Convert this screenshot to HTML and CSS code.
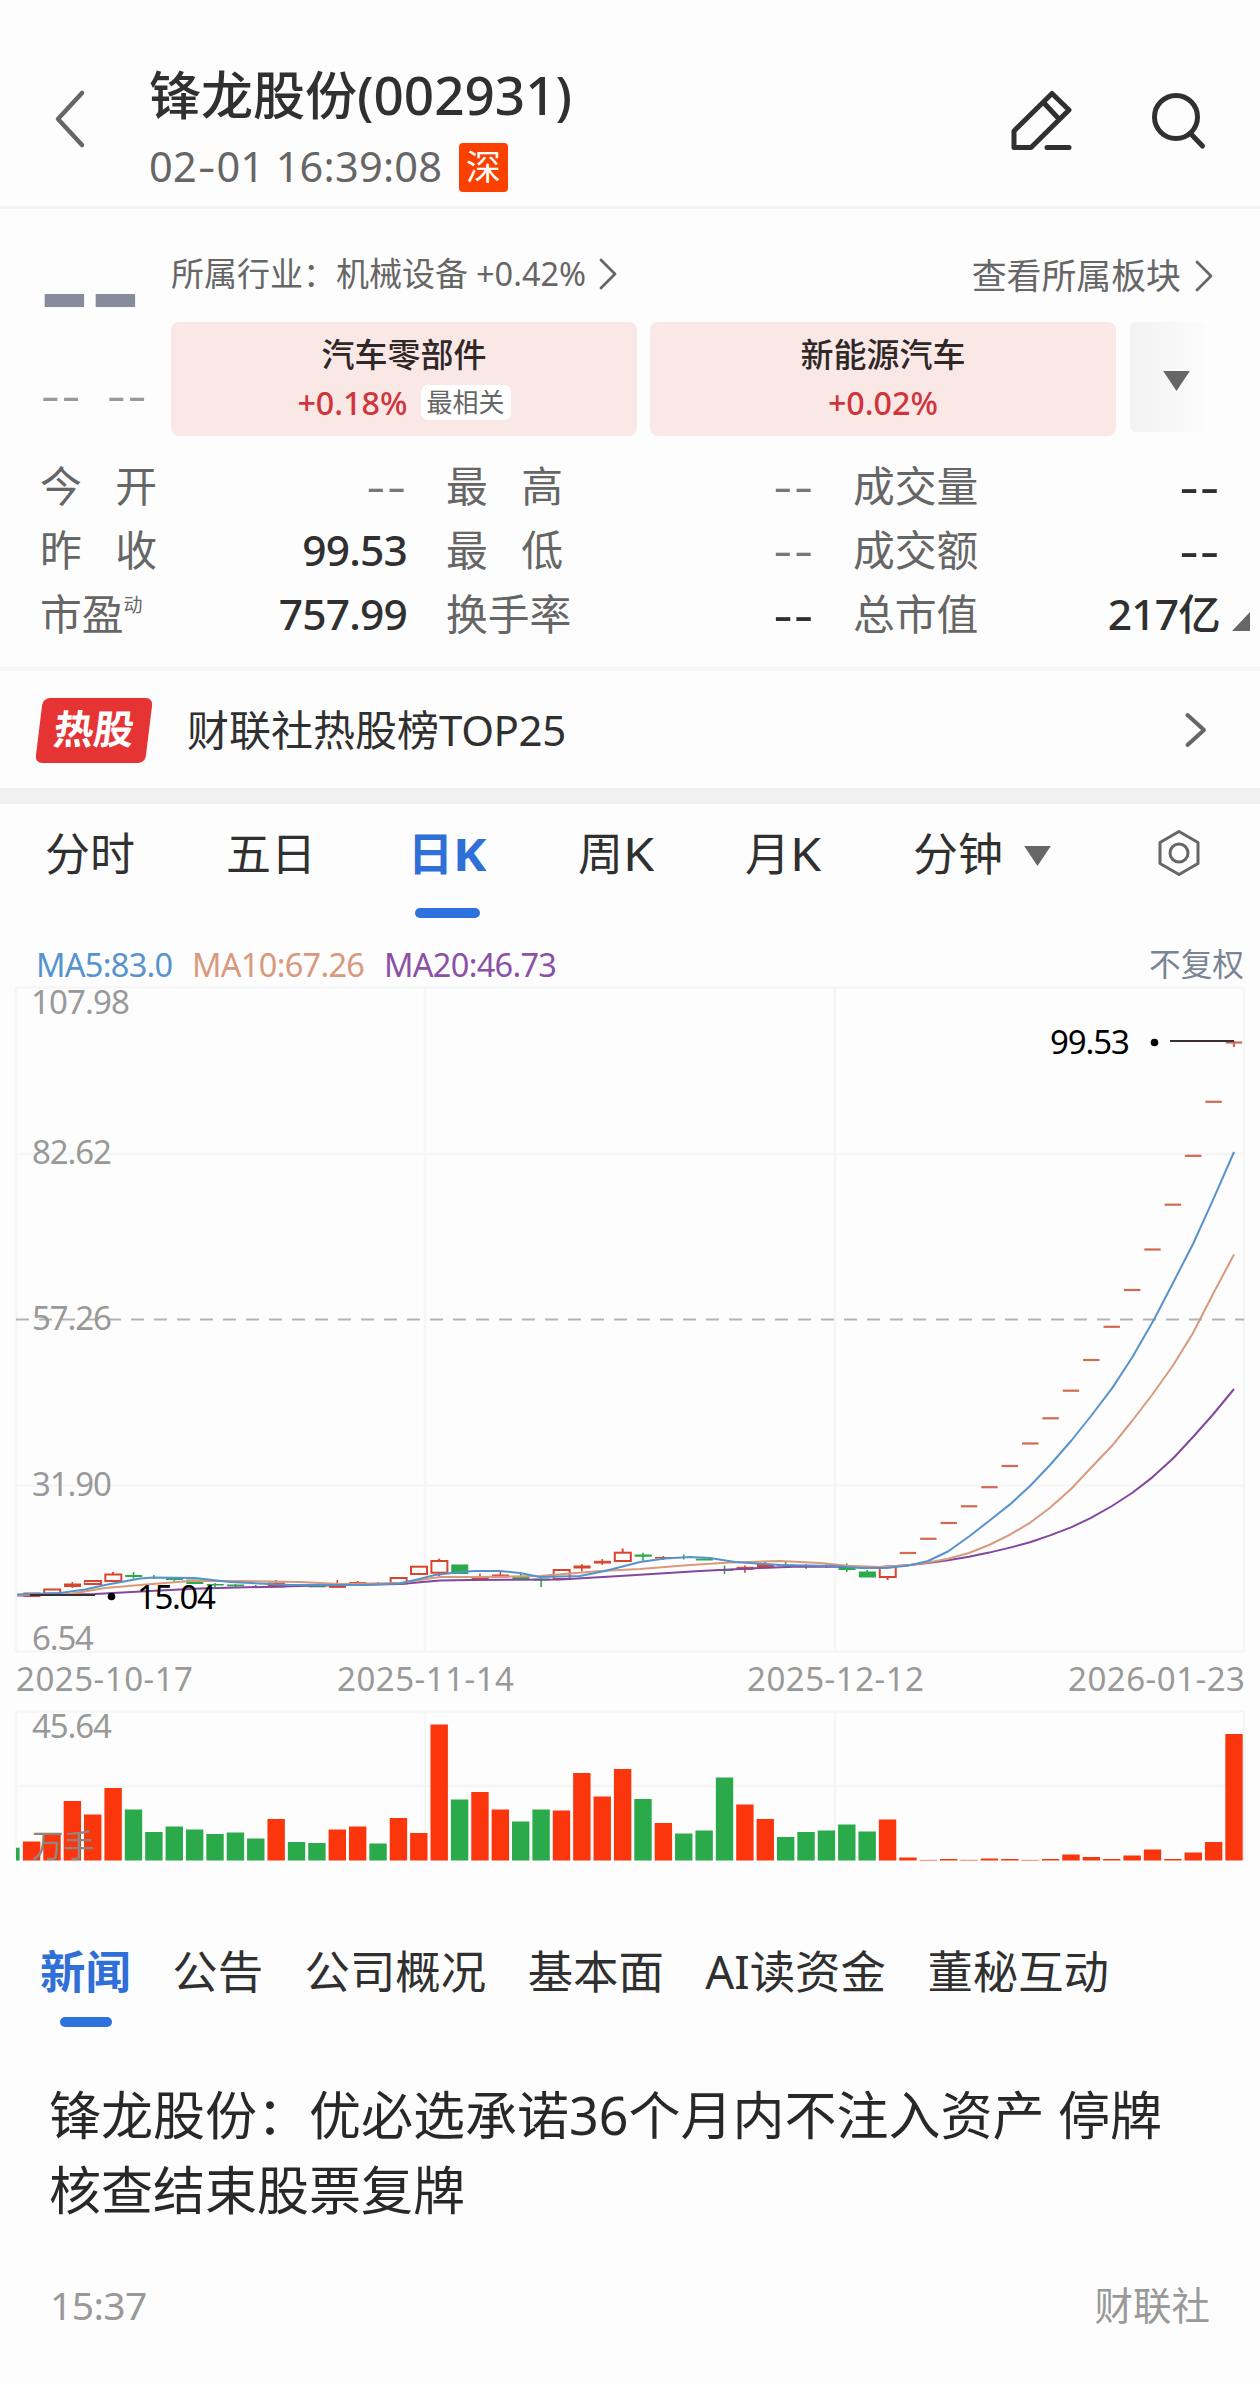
FILE: index.html
```html
<!DOCTYPE html>
<html lang="zh-CN">
<head>
<meta charset="utf-8">
<title>锋龙股份(002931)</title>
<link rel="stylesheet" href="styles.css">
</head>
<body>
<header class="topbar">
  <svg class="back" viewBox="0 0 34 60"><path d="M29 5 5 31l24 26"/></svg>
  <div class="heading">
    <h1 class="name">锋龙股份<span class="code">(002931)</span></h1>
    <div class="stamp"><span class="stamp-time">02<span class="hy">-</span>01 16:39:08</span><span class="market">深</span></div>
  </div>
  <div class="actions">
    <svg class="edit" viewBox="0 0 64 64"><path d="M43 6.500 60 23 22 60.500H5V44ZM35.500 16.500 49 31M38 60.500H60"/></svg>
    <svg class="search" viewBox="0 0 64 64"><circle cx="28" cy="30" r="21.500"/><path d="M42.500 46.500 54.500 59"/></svg>
  </div>
</header>

<section class="quote">
  <div class="quote-top">
    <div class="price">
      <div class="price-now"><span>-</span><span>-</span></div>
      <div class="price-diff"><span class="nil">--</span><span class="nil">--</span></div>
    </div>
    <div class="sectors">
      <div class="sector-head">
        <div class="industry"><span>所属行业：机械设备</span><span class="industry-pct">+0.42%</span><svg class="chev" viewBox="0 0 18 32"><path d="M2 2 16 16 2 30"/></svg></div>
        <div class="boards"><span>查看所属板块</span><svg class="chev" viewBox="0 0 18 32"><path d="M2 2 16 16 2 30"/></svg></div>
      </div>
      <div class="cards">
        <div class="card"><div class="card-name">汽车零部件</div><div class="card-row"><span class="card-pct">+0.18%</span><span class="tag">最相关</span></div></div>
        <div class="card"><div class="card-name">新能源汽车</div><div class="card-row"><span class="card-pct">+0.02%</span></div></div>
        <div class="more"><svg class="tri" viewBox="0 0 28 21"><path d="M0 0H28L14 21Z"/></svg></div>
      </div>
    </div>
  </div>
  <div class="stats">
    <div class="stat"><span class="label two"><i>今</i><i>开</i></span><span class="nil">--</span></div>
    <div class="stat"><span class="label two"><i>最</i><i>高</i></span><span class="nil">--</span></div>
    <div class="stat"><span class="label">成交量</span><span class="nil dark">--</span></div>
    <div class="stat"><span class="label two"><i>昨</i><i>收</i></span><span class="val">99.53</span></div>
    <div class="stat"><span class="label two"><i>最</i><i>低</i></span><span class="nil">--</span></div>
    <div class="stat"><span class="label">成交额</span><span class="nil dark">--</span></div>
    <div class="stat"><span class="label">市盈<sup>动</sup></span><span class="val">757.99</span></div>
    <div class="stat"><span class="label">换手率</span><span class="nil dark">--</span></div>
    <div class="stat"><span class="label">总市值</span><span class="val">217亿</span><svg class="corner" viewBox="0 0 18 19"><path d="M18 0V19H0Z"/></svg></div>
  </div>
</section>

<section class="hot">
  <div class="hot-badge"><span>热股</span></div>
  <div class="hot-text">财联社热股榜<span class="top">TOP25</span></div>
  <svg class="hot-chev" viewBox="0 0 24 36"><path d="M3.500 3 20 18 3.500 33"/></svg>
</section>

<nav class="periods">
  <span class="p1">分时</span><span class="p2">五日</span><span class="p3 on">日<b>K</b></span><span class="p4">周<b>K</b></span><span class="p5">月<b>K</b></span><span class="p6">分钟</span>
  <svg class="tri" viewBox="0 0 28 21"><path d="M0 0H28L14 21Z"/></svg>
  <svg class="gear" viewBox="0 0 44 48"><path d="M22 2.500 41 13.500V34.500L22 45.500 3 34.500V13.500Z"/><circle cx="22" cy="24" r="9"/></svg>
</nav>

<section class="legend">
  <span class="ma5">MA5:83.0</span><span class="ma10">MA10:67.26</span><span class="ma20">MA20:46.73</span><span class="adjust">不复权</span>
</section>

<svg class="chart" viewBox="0 982 1260 888">
  <g class="grid">
    <path d="M16 987.500H1244M16 1154H1244M16 1485.500H1244M16 1651.500H1244M16 987V1651M425 987V1651M835 987V1651M1244 987V1651"/>
    <path d="M16 1711.500H1244M16 1786H1244M16 1711V1860M425 1711V1860M835 1711V1860M1244 1711V1860"/>
  </g>
  <path class="mid" d="M16 1319.500H1244"/>
  <g id="volume"></g>
  <g id="candles"></g>
  <path class="line ma20" d="M17 1595.500 95 1594 150 1591 200 1588.500 300 1586 400 1584 440 1580.500 470 1580 560 1579.500 620 1576 700 1571 760 1568 800 1566.500 880 1567 908 1565.300 928 1563 948 1560.300 969 1556.800 989 1552.600 1010 1547.600 1030 1542.300 1050 1535.400 1071 1527.400 1091 1517.800 1112 1506 1132 1493 1152 1477.600 1173 1458.500 1193 1437 1213 1414.500 1234 1389"/>
  <path class="line ma10" d="M17 1595 70 1594 105 1588 140 1585 190 1581 240 1581 300 1582 340 1584 400 1583 440 1577 480 1577 540 1576 600 1571 640 1569 690 1565 730 1562.500 780 1561 820 1563 850 1566 880 1567 908 1565.200 928 1562.600 948 1558.700 969 1553 989 1545 1010 1534.600 1030 1522.800 1050 1507.800 1071 1489 1091 1467.700 1112 1445.800 1132 1421 1152 1395 1173 1365.500 1193 1333 1213 1294 1234 1254.500"/>
  <path class="line ma5" d="M17 1594.500 60 1593 85 1589.500 105 1585 140 1578.500 153 1577.500 195 1578 230 1582 290 1585 360 1585 400 1583.500 415 1580 435 1575 460 1572 475 1571 500 1571 520 1573 540 1577 560 1576.500 580 1576 605 1571 640 1562 665 1558.500 690 1557 710 1558 735 1562 780 1565 835 1566 860 1568 887 1568 908 1565.600 928 1561 948 1551.500 969 1536.500 989 1521 1010 1504.400 1030 1486 1050 1465 1071 1441 1091 1416 1112 1388.400 1132 1357.800 1154 1319.500 1173 1283 1193 1244 1213 1199.800 1234 1152"/>
  <path class="pointer" d="M1170 1041H1234M30 1595H95"/>
  <circle cx="1154.500" cy="1042.500" r="3.800"/><circle cx="111.500" cy="1596.500" r="3.800"/>
  <g class="mark">
    <text x="1050" y="1054" textLength="80">99.53</text>
    <text x="137" y="1608.500" textLength="79">15.04</text>
  </g>
  <g class="axis">
    <text x="31" y="1013.500" textLength="99">107.98</text>
    <text x="32" y="1163.500" textLength="80">82.62</text>
    <text x="32" y="1330" textLength="80">57.26</text>
    <text x="32" y="1495.500" textLength="80">31.90</text>
    <text x="32" y="1649.500" textLength="62">6.54</text>
    <text x="16" y="1690.500" textLength="177">2025-10-17</text>
    <text x="337" y="1690.500" textLength="177">2025-11-14</text>
    <text x="747" y="1690.500" textLength="177">2025-12-12</text>
    <text x="1068" y="1690.500" textLength="177">2026-01-23</text>
    <text x="32" y="1737.500" textLength="80">45.64</text>
    <text class="unit" x="32" y="1857">万手</text>
  </g>
</svg>

<nav class="topics">
  <span class="on">新闻</span><span>公告</span><span>公司概况</span><span>基本面</span><span>AI读资金</span><span>董秘互动</span>
</nav>

<article class="news">
  <h2 class="news-title">锋龙股份：优必选承诺36个月内不注入资产 停牌<br>核查结束股票复牌</h2>
  <div class="news-meta"><span class="news-time">15:37</span><span>财联社</span></div>
</article>
<script src="chart.js"></script>
</body>
</html>
```

FILE: styles.css
```css
* { box-sizing: border-box; }
body {
  margin: 0;
  width: 1260px;
  height: 2384px;
  overflow: hidden;
  background: #fdfdfd;
  color: #303030;
  font-family: "Noto Sans", "Noto Sans CJK SC", sans-serif;
}
svg { display: block; flex: none; overflow: visible; }
h1, h2 { margin: 0; font-weight: 500; }
i { font-style: normal; }
span { white-space: nowrap; }

/* header */
.topbar { height: 209px; border-bottom: 3px solid #f4f4f4; display: flex; padding: 60px 48px 0 53px; }
.back { width: 34px; height: 60px; margin-top: 28px; fill: none; stroke: #666; stroke-width: 4.500; stroke-linecap: round; stroke-linejoin: round; }
.heading { margin-left: 62px; flex: 1; }
.name { font-size: 52px; line-height: 70px; height: 70px; letter-spacing: 0; }
.code { font-size: 53px; letter-spacing: 0; }
.stamp { display: flex; align-items: center; height: 50px; margin-top: 12px; gap: 17px; }
.stamp-time { width: 293px; font-size: 41.500px; line-height: 48px; height: 50px; color: #666; letter-spacing: .25px; }
.hy { display: inline-block; transform: scaleX(1.300); margin: 0 3px; }
.market { width: 49px; height: 49px; border-radius: 4px; background: #fc4000; color: #fff; font-size: 35px; line-height: 48px; text-align: center; }
.actions { display: flex; gap: 75px; padding-top: 27px; }
.actions svg { width: 64px; height: 64px; fill: none; stroke: #303030; stroke-width: 5; stroke-linecap: round; stroke-linejoin: round; }

/* quote */
.quote { height: 462px; border-bottom: 4px solid #f6f6f6; }
.quote-top { display: flex; height: 246px; padding-right: 47px; }
.price { width: 171px; }
.price-now { display: flex; gap: 12px; padding-left: 45px; margin-top: 44px; height: 70px; }
.price-now span { width: 39px; height: 70px; font-size: 104px; line-height: 70px; font-weight: 700; color: #868c9b; display: flex; justify-content: center; transform: scaleX(1.440); }
.price-diff { display: flex; gap: 27px; padding-left: 41px; margin-top: 42px; line-height: 60px; }
.price-diff .nil { color: #999; }
.nil { width: 39px; height: 60px; display: inline-flex; justify-content: space-between; font-size: 42px; line-height: 60px; color: #777; letter-spacing: 1.500px; transform: scaleX(1.380); transform-origin: 0 50%; }
.nil.dark { color: #303030; font-weight: 500; }
.sectors { flex: 1; }
.sector-head { display: flex; justify-content: space-between; align-items: flex-start; height: 113px; padding-top: 45px; color: #666; }
.industry, .boards { display: flex; align-items: center; height: 40px; font-size: 33px; line-height: 40px; }
.industry-pct { margin-left: 8px; font-size: 32.500px; }
.boards { font-size: 34.900px; margin-top: 2px; }
.chev { width: 18px; height: 32px; fill: none; stroke: #666; stroke-width: 2.800; stroke-linecap: round; stroke-linejoin: round; margin-left: 13px; }
.boards .chev { margin-left: 14px; }
.cards { display: flex; }
.card { width: 466px; height: 114px; margin-right: 13px; border-radius: 8px; background: #fae8e7; display: flex; flex-direction: column; align-items: center; padding-top: 10px; }
.card-name { font-size: 33px; line-height: 46px; font-weight: 500; color: #302827; }
.card-row { display: flex; align-items: center; height: 48px; gap: 13px; }
.card-pct { font-size: 32.300px; font-weight: 500; color: #d0353b; }
.tag { background: #fff; border-radius: 7px; height: 35px; padding: 0 6px; font-size: 26px; line-height: 34px; color: #666; }
.more { width: 76px; height: 110px; margin-left: 1px; border-radius: 6px; background: linear-gradient(90deg, #f2f2f2, #fcfcfc); display: flex; align-items: center; justify-content: center; padding: 8px 0 0 16px; }
.tri { width: 27px; height: 20px; fill: #666; }
.stats { display: grid; grid-template-columns: 406px 407px 406px; grid-auto-rows: 64px; padding-left: 1px; margin-top: -1px; }
.stat { display: flex; align-items: center; justify-content: space-between; padding-left: 39px; height: 64px; position: relative; line-height: 60px; }
.label { font-size: 41.800px; line-height: 60px; color: #666; }
.label.two { display: flex; width: 117px; justify-content: space-between; }
.label sup { font-size: 19px; line-height: 19px; vertical-align: 18px; }
.val { font-size: 42.500px; font-weight: 500; letter-spacing: -.8px; }
.stat .nil { transform-origin: 100% 50%; justify-content: flex-end; letter-spacing: 1.500px; margin-right: -1px; }
.corner { position: absolute; left: 418px; top: 30px; width: 18px; height: 19px; fill: #666; }

/* hot list */
.hot { height: 133px; border-bottom: 16px solid #f2f2f2; display: flex; align-items: center; padding: 1px 52px 0 39px; }
.hot-badge { width: 110px; height: 65px; transform: skewX(-7deg); border-radius: 7px; background: #e63435; color: #fff; font-weight: 700; font-size: 40px; line-height: 62px; text-align: center; }
.hot-text { margin-left: 38px; font-size: 42px; line-height: 60px; flex: 1; }
.top { letter-spacing: -.4px; }
.hot-chev { width: 24px; height: 36px; fill: none; stroke: #666; stroke-width: 4; stroke-linecap: round; stroke-linejoin: round; }

/* period tabs */
.periods { display: grid; grid-template-columns: 181px 182px 170px 167px 168px 111px 130px 1fr; height: 134px; padding: 20px 0 0 45px; align-items: start; font-size: 45px; line-height: 60px; }
.periods b { display: inline-block; font-weight: inherit; transform: scaleX(1.120); transform-origin: 0 50%; }
.periods .tri { margin-top: 22px; }
.periods .gear { width: 44px; height: 48px; margin: 5px 0 0 3px; fill: none; stroke: #666; stroke-width: 3; stroke-linejoin: round; }
.on { position: relative; color: #2e6fd8; font-weight: 700; }
.on::after { content: ""; position: absolute; left: 7px; top: 84px; width: 65px; height: 10px; border-radius: 5px; background: #2e72df; }

/* moving averages */
.legend { height: 44px; display: flex; gap: 20px; padding: 0 16px 0 36px; font-size: 32.500px; line-height: 53px; }
.legend .ma5 { color: #5793cf; letter-spacing: -.7px; width: 136px; }
.legend .ma10 { color: #d9997c; letter-spacing: -.7px; width: 172px; }
.legend .ma20 { color: #8a51a5; letter-spacing: -.7px; }
.adjust { margin-left: auto; font-size: 31.700px; line-height: 51px; color: #7b8494; }

/* charts */
.chart { width: 1260px; height: 888px; }
.grid path { fill: none; stroke: #f6f6f7; stroke-width: 2.500; }
.mid { stroke: #b3b3b3; stroke-width: 2; stroke-dasharray: 13 10; }
.line { fill: none; stroke-width: 2; stroke-linejoin: round; }
.line.ma5 { stroke: #5793cb; }
.line.ma10 { stroke: #d9997c; }
.line.ma20 { stroke: #82479f; }
.pointer { stroke: #3a3034; stroke-width: 2; }
.axis { fill: #999; font-size: 33px; }
.mark { fill: #000; font-size: 33px; }
.unit { font-size: 31.500px; fill: #8f8580; }
.up { fill: #fb360c; }
.down { fill: #2aaa4a; }
.rise { fill: #d9452c; stroke: #d9452c; }
.hollow { fill: #fdfdfd; stroke: #d9452c; stroke-width: 2; }
.fall { fill: #2aaa4a; stroke: #2aaa4a; }
.limit { stroke: #d06a50; stroke-width: 2.200; }

/* news */
.topics { height: 172px; display: flex; gap: 41.500px; padding: 71px 0 0 40px; font-size: 45.400px; line-height: 60px; }
.topics .on::after { left: 20px; top: 76px; width: 52px; }
.news { padding: 35px 50px 0 49px; }
.news-title { font-size: 52px; line-height: 75px; font-weight: 400; color: #282828; }
.news-meta { display: flex; justify-content: space-between; align-items: center; margin-top: 48px; padding-left: 1px; font-size: 38.500px; line-height: 60px; color: #999; }
.news-time { font-size: 39px; letter-spacing: -.6px; }
```

FILE: chart.js
```js
const NS = "http://www.w3.org/2000/svg";
const STEP = 20.38, FIRST = 31.6, BASE = 1860.5;
const centre = k => FIRST + k * STEP;

function add(parent, tag, cls, attrs) {
  const el = document.createElementNS(NS, tag);
  el.setAttribute("class", cls);
  for (const key in attrs) el.setAttribute(key, attrs[key]);
  parent.appendChild(el);
}

// Volume bars: direction and height
const volume = [
  "u19", "u26", "u59.5", "u46", "u72.5", "d51", "d28.5", "d34", "d31", "d26.5",
  "d28", "d22", "u41.5", "d18.5", "d17.5", "u31", "u34", "d17", "u42.5", "u27.5",
  "u136", "d61", "u68.5", "u51", "d39", "d51", "u50", "u87.5", "u64", "u91.5",
  "d61.5", "u37.5", "d27", "d30", "d83", "u56", "u41.5", "d23.5", "d28.5", "d30",
  "d36", "d29", "u41", "u3", "u.6", "u1.5", "u.6", "u2", "u1.5", "u.6",
  "u1.5", "u6", "u3.5", "u1.5", "u5", "u11", "u1.5", "u8", "u18.5", "u126.5"
];
const volumeLayer = document.getElementById("volume");
add(volumeLayer, "rect", "down", { x: 16, y: 1847.7, width: 3.6, height: 12.8 });
volume.forEach((v, k) => {
  const h = parseFloat(v.slice(1));
  add(volumeLayer, "rect", v[0] === "u" ? "up" : "down", { x: centre(k) - 8.7, y: BASE - h, width: 17.4, height: h });
});

// Candles: kind (r filled, h hollow, g falling, t wick only), body top, body bottom, high, low
const candles = [
  ["r", 1593, 1596.5, 1593, 1596.5], ["h", 1589.5, 1593.5, 1589.5, 1593.5], ["r", 1584, 1586.5, 1582, 1588],
  ["h", 1581, 1584, 1581, 1584], ["h", 1574.5, 1581, 1572, 1581], ["g", 1575.5, 1576.5, 1572, 1578.5],
  ["t", 0, 0, 1575, 1579], ["g", 1578, 1579.5, 1577, 1582], ["g", 1580, 1583.5, 1580, 1583.5],
  ["g", 1584.5, 1585, 1583, 1587], ["g", 1585, 1585.8, 1584, 1587], ["t", 0, 0, 1585, 1588],
  ["r", 1583, 1587, 1580, 1587], ["g", 1584.5, 1585.5, 1584, 1586], ["g", 1585.7, 1586.8, 1585, 1587],
  ["r", 1584, 1587.3, 1580, 1587.3], ["r", 1582.5, 1585, 1581, 1585], ["t", 0, 0, 1582, 1585],
  ["h", 1578, 1583.5, 1578, 1583.5], ["h", 1566.7, 1574, 1566.7, 1574], ["h", 1561, 1572.7, 1558.7, 1576],
  ["g", 1565, 1573.5, 1565, 1573.5], ["r", 1577, 1578.5, 1573.5, 1579], ["r", 1575, 1577, 1572, 1577],
  ["g", 1577.3, 1578.5, 1573.5, 1579], ["g", 1579, 1580, 1578.5, 1587], ["h", 1570, 1579, 1570, 1579],
  ["r", 1566, 1568, 1564, 1571.7], ["r", 1561.3, 1563, 1559, 1565], ["h", 1552.7, 1561, 1548.5, 1561],
  ["g", 1555, 1556.2, 1552.7, 1561.5], ["r", 1557.5, 1558, 1556, 1560], ["t", 0, 0, 1554.5, 1559.5],
  ["g", 1559.2, 1560, 1557, 1560], ["g", 1569.7, 1570.3, 1565.5, 1574], ["r", 1567.3, 1569.3, 1565.5, 1572.7],
  ["r", 1564.5, 1567.3, 1562, 1567.3], ["g", 1565, 1565.5, 1562, 1567], ["t", 0, 0, 1564, 1568.7],
  ["t", 0, 0, 1563.5, 1568], ["g", 1566, 1569.5, 1563.5, 1572], ["g", 1572, 1577, 1570, 1577],
  ["h", 1567, 1577, 1567, 1580]
];
const candleLayer = document.getElementById("candles");
candles.forEach(([kind, top, bottom, high, low], k) => {
  const cls = kind === "h" ? "hollow" : kind === "r" ? "rise" : "fall";
  const x = centre(k);
  add(candleLayer, "path", cls, { d: `M${x} ${high}V${low}`, "stroke-width": 1.6 });
  if (kind !== "t") add(candleLayer, "rect", cls, { x: x - 7.8, y: top, width: 16, height: bottom - top });
});

// Sessions locked at the daily limit
[1553, 1538.8, 1523, 1506.3, 1487.2, 1466, 1443.5, 1418.3, 1390.7, 1360, 1326.8, 1290, 1249.5, 1204.7, 1155.8, 1101.8, 1042.5]
  .forEach((y, i) => add(candleLayer, "path", "limit", { d: `M${centre(43 + i) - 8.2} ${y}h16.4` }));
add(candleLayer, "path", "limit", { d: "M1234 1041V1047" });
```
